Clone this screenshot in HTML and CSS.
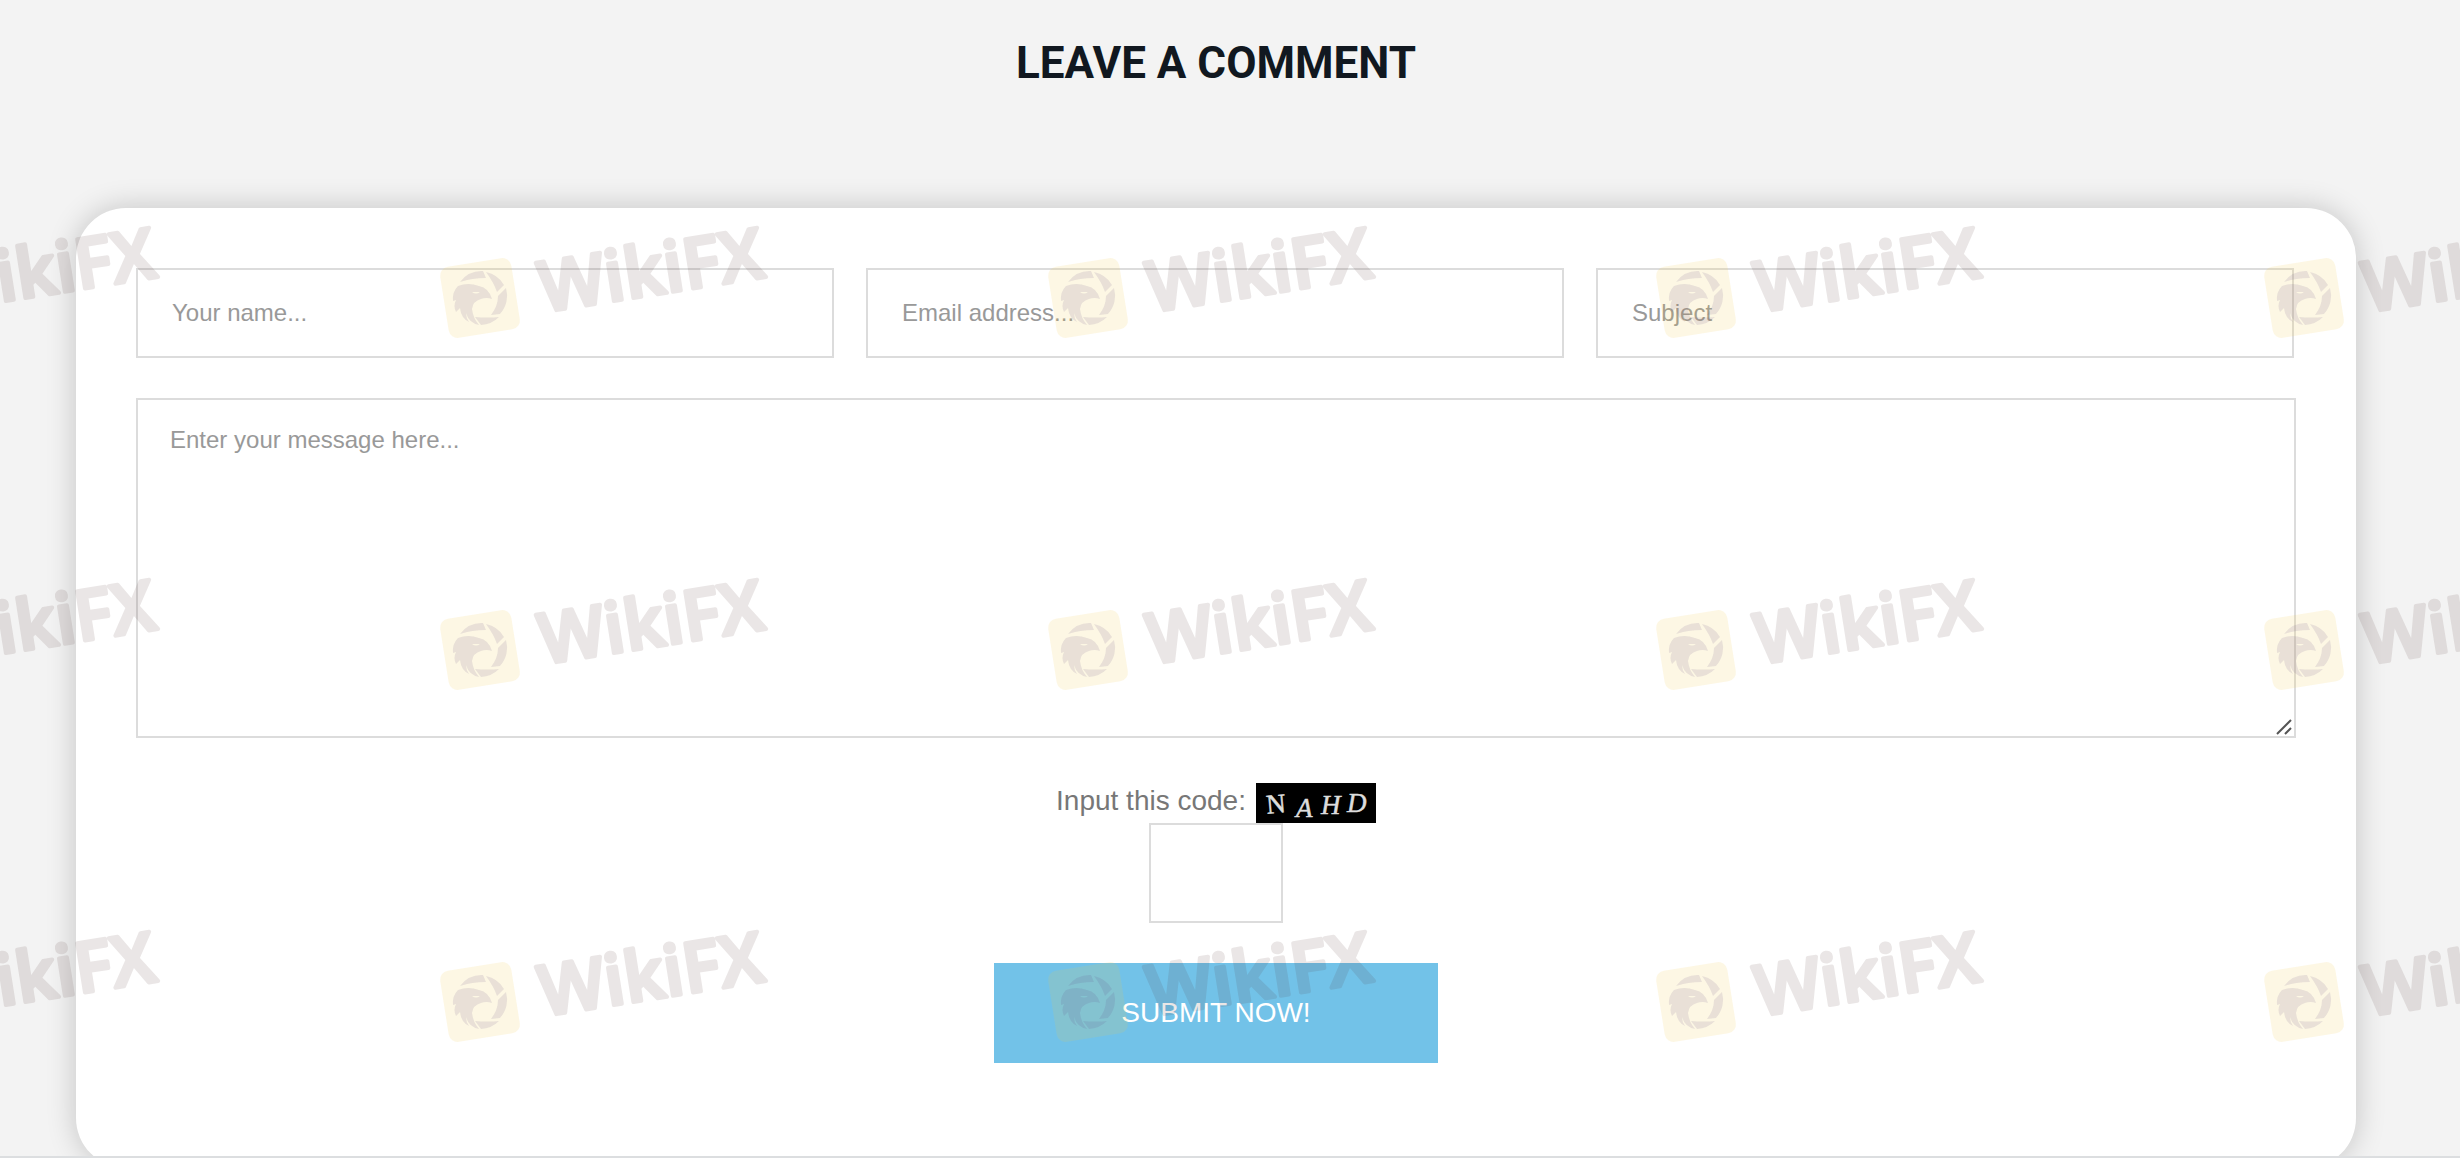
FILE: index.html
```
<!DOCTYPE html>
<html lang="en">
<head>
    <meta charset="UTF-8">
    <title>Leave a comment</title>
    <link rel="stylesheet" href="styles.css">
</head>
<body>
    <section class="comment-section">
        <h2 class="section-title">LEAVE A COMMENT</h2>
        <form class="comment-card">
            <div class="field-row">
                <input type="text" name="name" placeholder="Your name..." aria-label="Your name">
                <input type="email" name="email" placeholder="Email address..." aria-label="Email address">
                <input type="text" name="subject" placeholder="Subject" aria-label="Subject">
            </div>
            <div class="message-box">
                <textarea name="message" placeholder="Enter your message here..." aria-label="Message"></textarea>
                <svg class="resize-grip" viewBox="0 0 16 16">
                    <path d="M1 15L15 1M9 15L15 9"/>
                </svg>
            </div>
            <div class="captcha">
                <div class="captcha-line">
                    <label for="code">Input this code:</label>
                    <svg class="captcha-image" viewBox="0 0 120 40">
                        <text x="10" y="30" transform="rotate(-5 20 20)">N</text>
                        <text class="slanted" x="40" y="34">A</text>
                        <text class="slanted" x="65" y="31">H</text>
                        <text class="slanted" x="91" y="29">D</text>
                    </svg>
                </div>
                <input type="text" id="code" name="code" class="code-input">
            </div>
            <button type="submit" class="submit-btn">SUBMIT NOW!</button>
        </form>
        <svg class="watermark" aria-hidden="true">
            <defs>
                <pattern id="wikifx" width="608" height="352" patternUnits="userSpaceOnUse" patternTransform="translate(420 200)">
                    <g transform="translate(60 98)">
                        <rect class="mark-tile" x="-36" y="-36" width="72" height="72" rx="9" transform="rotate(-9)"/>
                        <g class="mark-bird">
                            <path d="M-20 -16A27 27 0 0 1 3 -27L6 -20Q-8 -20 -20 -16Z"/>
                            <path d="M6 -26A27 27 0 0 1 24 -13L17 -6Q14 -15 6 -26Z"/>
                            <path d="M26 -10A27 27 0 0 1 20 16L11 17Q18 8 18 -2Z"/>
                            <path d="M19 19A27 27 0 0 1 1 27L-5 19Q8 20 19 19Z"/>
                            <path d="M-22 -12Q-12 -16 -1 -12Q9 -10 12 1Q6 -1 1 1Q-7 3 -8 11Q-7 20 -1 27Q-11 25 -14 15Q-14 20 -11 24Q-19 20 -20 10L-24 14Q-27 8 -24 2L-27 3Q-28 -6 -22 -12ZM-8 -6Q-4 -3 0 -6Z"/>
                        </g>
                        <text class="mark-text" x="60" y="24" transform="rotate(-9)">WikiFX</text>
                    </g>
                </pattern>
            </defs>
            <rect width="100%" height="100%" fill="url(#wikifx)"/>
        </svg>
    </section>
</body>
</html>
```
FILE: styles.css
```
* {
    box-sizing: border-box;
}
body {
    margin: 0;
    background-color: #f3f3f3;
    font-family: "Liberation Sans", Arial, sans-serif;
    color: #777;
}
.comment-section {
    position: relative;
    overflow: hidden;
    padding: 36px 104px 0 76px;
    border-bottom: 2px solid #dcdee0;
}
.section-title {
    margin: 0 0 118px;
    font-family: Roboto, sans-serif;
    font-size: 44px;
    line-height: 54px;
    font-weight: 700;
    text-align: center;
    color: #111820;
}
.comment-card {
    display: flex;
    flex-direction: column;
    align-items: center;
    margin-bottom: -12px;
    padding: 60px 60px 105px;
    background-color: #fff;
    border-radius: 50px;
    box-shadow: 0 0 30px rgba(0, 0, 0, 0.2);
}
.field-row {
    display: grid;
    grid-template-columns: repeat(3, 1fr);
    gap: 32px;
    width: 100%;
    padding-right: 2px;
}
input,
textarea {
    width: 100%;
    border: 2px solid #dcdcdc;
    border-radius: 0;
    background-color: transparent;
    font-family: inherit;
    font-size: 24px;
    color: #777;
    outline: none;
}
input {
    height: 90px;
    padding: 0 34px;
}
textarea {
    display: block;
    height: 340px;
    padding: 26px 32px;
    line-height: 28px;
    resize: none;
}
::placeholder {
    color: #999;
    opacity: 1;
}
input:focus,
textarea:focus {
    border-color: #72c2e8;
}
.message-box {
    position: relative;
    width: 100%;
    margin-top: 40px;
}
.resize-grip {
    position: absolute;
    right: 4px;
    bottom: 3px;
    width: 16px;
    height: 16px;
    fill: none;
    stroke: #555;
    stroke-width: 2;
}
.captcha {
    display: flex;
    flex-direction: column;
    align-items: center;
    margin-top: 45px;
}
.captcha-line {
    display: flex;
    gap: 10px;
    font-size: 28px;
    line-height: 36px;
}
.captcha-image {
    width: 120px;
    height: 40px;
    background-color: #000;
    fill: #ddd;
    stroke: #ddd;
    stroke-width: 0.5;
    font-family: "Liberation Serif", serif;
    font-size: 27px;
}
.slanted {
    font-style: italic;
}
.code-input {
    width: 134px;
    height: 100px;
}
.submit-btn {
    width: 444px;
    height: 100px;
    margin-top: 40px;
    border: none;
    background-color: #72c2e8;
    font-family: inherit;
    font-size: 28px;
    color: #fff;
    cursor: pointer;
}
.submit-btn:hover {
    background-color: #5bb5e0;
}
.watermark {
    position: absolute;
    top: 0;
    left: 0;
    width: 100%;
    height: 100%;
    pointer-events: none;
}
.mark-tile {
    fill: #f5c842;
    fill-opacity: 0.14;
}
.mark-bird {
    fill: #5a4678;
    fill-opacity: 0.13;
    fill-rule: evenodd;
}
.mark-text {
    fill: #50302d;
    stroke: #50302d;
    stroke-width: 4;
    stroke-linejoin: round;
    opacity: 0.12;
    font-family: "Open Sans", sans-serif;
    font-size: 70px;
    font-weight: 600;
}
```
